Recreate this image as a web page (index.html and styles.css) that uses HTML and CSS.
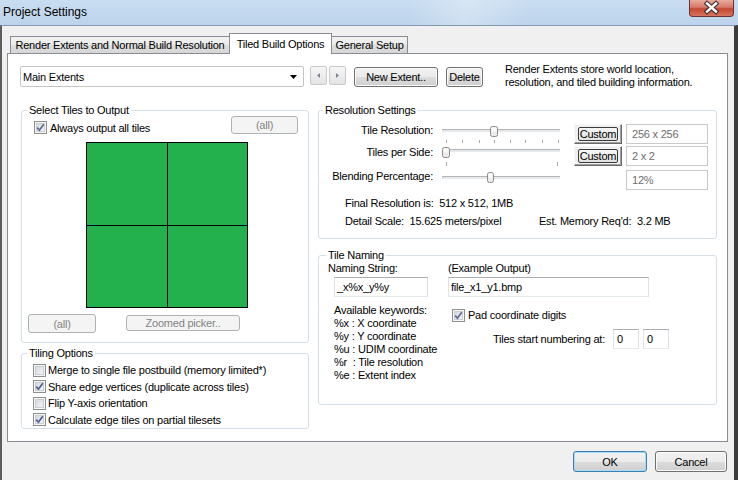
FILE: index.html
```html
<!DOCTYPE html>
<html>
<head>
<meta charset="utf-8">
<title>Project Settings</title>
<link rel="stylesheet" href="styles.css">
</head>
<body>
<div class="titlebar">
  <span class="title">Project Settings</span>
  <div class="close">
    <svg width="43" height="16" viewBox="0 0 43 16"><path d="M17 3.5 L26 11.5 M26 3.5 L17 11.5" stroke="#3a3030" stroke-width="4.6" stroke-linecap="square" fill="none"/><path d="M17 3.5 L26 11.5 M26 3.5 L17 11.5" stroke="#ffffff" stroke-width="2.4" stroke-linecap="square" fill="none"/></svg>
  </div>
</div>
<div class="client">
  <div class="tabs">
    <div class="tab t1">Render Extents and Normal Build Resolution</div>
    <div class="tab t2">Tiled Build Options</div>
    <div class="tab t3">General Setup</div>
  </div>
  <div class="panel">
    <div class="toprow">
      <div class="combo"><span>Main Extents</span><svg width="7" height="4" viewBox="0 0 7 4"><path d="M0 0H7L3.5 4Z" fill="#000"/></svg></div>
      <div class="spin">
        <div class="sb"><svg width="3" height="5" viewBox="0 0 3 5"><path d="M3 0V5L0 2.5Z" fill="#7d8796"/></svg></div>
        <div class="sb"><svg width="3" height="5" viewBox="0 0 3 5"><path d="M0 0V5L3 2.5Z" fill="#7d8796"/></svg></div>
      </div>
      <button class="btn newext">New Extent..</button>
      <button class="btn del">Delete</button>
      <div class="desc">Render Extents store world location,<br>resolution, and tiled building information.</div>
    </div>
    <div class="cols">
      <div class="col leftcol">
        <fieldset class="grp g1">
          <legend>Select Tiles to Output</legend>
          <div class="g1in">
            <div class="r1">
              <div class="chk"><span class="cb on"><svg width="11" height="11" viewBox="0 0 11 11"><path d="M2.2 5.6 L4.4 8.2 L8.8 2.3" stroke="#5a6a8e" stroke-width="1.7" fill="none"/></svg></span><span>Always output all tiles</span></div>
              <button class="btn dis allbtn">(all)</button>
            </div>
            <div class="tiles"><div class="tc"></div><div class="tc"></div><div class="tc"></div><div class="tc"></div></div>
            <div class="pick">
              <button class="btn dis all2">(all)</button>
              <button class="btn dis zoom">Zoomed picker..</button>
            </div>
          </div>
        </fieldset>
        <fieldset class="grp g2">
          <legend>Tiling Options</legend>
          <div class="opts">
            <div class="opt"><span class="cb"></span><span>Merge to single file postbuild (memory limited*)</span></div>
            <div class="opt"><span class="cb on"><svg width="11" height="11" viewBox="0 0 11 11"><path d="M2.2 5.6 L4.4 8.2 L8.8 2.3" stroke="#4a5e92" stroke-width="1.7" fill="none"/></svg></span><span>Share edge vertices (duplicate across tiles)</span></div>
            <div class="opt"><span class="cb"></span><span>Flip Y-axis orientation</span></div>
            <div class="opt"><span class="cb on"><svg width="11" height="11" viewBox="0 0 11 11"><path d="M2.2 5.6 L4.4 8.2 L8.8 2.3" stroke="#4a5e92" stroke-width="1.7" fill="none"/></svg></span><span>Calculate edge tiles on partial tilesets</span></div>
          </div>
        </fieldset>
      </div>
      <div class="col rightcol">
        <fieldset class="grp g3">
          <legend class="lg3">Resolution Settings</legend>
          <div class="res">
            <div class="rgrid">
              <div class="lbl">Tile Resolution:</div>
              <svg class="slider" width="120" height="22" viewBox="0 0 120 22">
                <rect x="1" y="5" width="118" height="1" fill="#b4b4b4"/><rect x="1" y="6" width="118" height="2" fill="#e6e9eb"/>
                <g fill="#a8a8a8"><rect x="5" y="16" width="1" height="3"/><rect x="21" y="16" width="1" height="3"/><rect x="38" y="16" width="1" height="3"/><rect x="53" y="16" width="1" height="3"/><rect x="69" y="16" width="1" height="3"/><rect x="84" y="16" width="1" height="3"/><rect x="101" y="16" width="1" height="3"/><rect x="117" y="16" width="1" height="3"/></g>
                <rect x="49.5" y="2.5" width="7" height="10" rx="2" fill="#ececec" stroke="#8a8a8a"/><rect x="50.5" y="3.5" width="5" height="4" fill="#fafafa"/>
              </svg>
              <div class="cellb"><button class="custom"><span class="ci">Custom</span></button></div>
              <div class="tb dis">256 x 256</div>

              <div class="lbl">Tiles per Side:</div>
              <svg class="slider" width="120" height="22" viewBox="0 0 120 22">
                <rect x="1" y="3" width="118" height="1" fill="#b4b4b4"/><rect x="1" y="4" width="118" height="2" fill="#e6e9eb"/>
                <g fill="#a8a8a8"><rect x="5" y="16" width="1" height="4"/><rect x="116" y="16" width="1" height="4"/></g>
                <rect x="1.5" y="1.5" width="7" height="10" rx="2" fill="#ececec" stroke="#8a8a8a"/><rect x="2.5" y="2.5" width="5" height="4" fill="#fafafa"/>
              </svg>
              <div class="cellb"><button class="custom"><span class="ci">Custom</span></button></div>
              <div class="tb dis">2 x 2</div>

              <div class="lbl">Blending Percentage:</div>
              <svg class="slider" width="120" height="20" viewBox="0 0 120 20">
                <rect x="1" y="6" width="118" height="1" fill="#b4b4b4"/><rect x="1" y="7" width="118" height="2" fill="#e6e9eb"/>
                <rect x="46.5" y="2.5" width="6" height="10" rx="2" fill="#ececec" stroke="#8a8a8a"/><rect x="47.5" y="3.5" width="4" height="4" fill="#fafafa"/>
              </svg>
              <div class="cellb"></div>
              <div class="tb dis">12%</div>
            </div>
            <div class="info">
              <div class="iline">Final Resolution is:  512 x 512, 1MB</div>
              <div class="iline two"><span class="dl">Detail Scale:  15.625 meters/pixel</span><span>Est. Memory Req'd:  3.2 MB</span></div>
            </div>
          </div>
        </fieldset>
        <fieldset class="grp g4">
          <legend class="lg4">Tile Naming</legend>
          <div class="nm">
            <div>Naming String:</div>
            <div>(Example Output)</div>
            <div class="tb nin">_x%x_y%y</div>
            <div class="tb exin">file_x1_y1.bmp</div>
            <div class="kw">Available keywords:<br>%x : X coordinate<br>%y : Y coordinate<br>%u : UDIM coordinate<br>%r  : Tile resolution<br>%e : Extent index</div>
            <div class="rightnm">
              <div class="pad"><span class="cb on"><svg width="11" height="11" viewBox="0 0 11 11"><path d="M2.2 5.6 L4.4 8.2 L8.8 2.3" stroke="#5a6a8e" stroke-width="1.7" fill="none"/></svg></span><span>Pad coordinate digits</span></div>
              <div class="num"><span class="numl">Tiles start numbering at:</span><div class="tb small">0</div><div class="tb small s2">0</div></div>
            </div>
          </div>
        </fieldset>
      </div>
    </div>
  </div>
  <div class="footer">
    <button class="btn ok">OK</button>
    <button class="btn cancel">Cancel</button>
  </div>
</div>
</body>
</html>
```
FILE: styles.css
```css
body {
  margin: 0;
  width: 738px;
  height: 480px;
  overflow: hidden;
  font-family: "Liberation Sans", Arial, sans-serif;
  font-size: 11px;
  letter-spacing: -0.22px;
  color: #000;
  background: #f0f0f0;
}

.titlebar {
  height: 25px;
  display: flex;
  justify-content: space-between;
  align-items: flex-start;
  background:
    linear-gradient(100deg, rgba(255,255,255,0) 55%, rgba(255,255,255,0.28) 63%, rgba(255,255,255,0) 72%),
    linear-gradient(180deg, #c9ddf1 0%, #bcd3eb 100%);
}
.title {
  font-size: 12px;
  letter-spacing: 0;
  line-height: 16px;
  padding: 4px 0 0 3px;
}
.close {
  box-sizing: border-box;
  width: 45px;
  height: 17px;
  margin-right: 4px;
  border: 1px solid #6b3232;
  border-top: none;
  border-radius: 0 0 4px 4px;
  background: linear-gradient(180deg, #e9aa9e 0%, #d67a69 45%, #c5472f 55%, #d77460 100%);
}
.close svg { display: block; }

.client {
  box-sizing: border-box;
  height: 455px;
  border-top: 1px solid #8799ae;
  border-left: 2px solid #5e5e5e;
  border-right: 4px solid #3c3c3c;
  background: #f0f0f0;
  display: flex;
  flex-direction: column;
}

.tabs {
  display: flex;
  align-items: flex-end;
  height: 21px;
  margin: 7px 0 -1px 8px;
  position: relative;
  z-index: 1;
}
.tab {
  box-sizing: border-box;
  border: 1px solid #898c95;
  border-bottom: none;
  text-align: center;
  background: linear-gradient(180deg, #f3f3f3 0%, #ebebeb 50%, #dedede 51%, #d6d6d6 100%);
  line-height: 16px;
  height: 17px;
  margin-bottom: 1px;
}
.t1 { width: 220px; }
.t2 {
  width: 103px;
  margin-left: -1px;
  height: 21px;
  margin-bottom: 0;
  background: #fff;
  line-height: 20px;
}
.t3 { width: 77px; margin-left: -1px; }

.panel {
  box-sizing: border-box;
  margin-left: 5px;
  width: 721px;
  height: 389px;
  border: 1px solid #898c95;
  background: #fff;
  padding: 12px 0 0 12px;
}

.toprow {
  display: flex;
  align-items: flex-start;
  height: 21px;
}
.combo {
  box-sizing: border-box;
  width: 284px;
  height: 21px;
  border: 1px solid #c4c4c4;
  border-radius: 2px;
  background: #fff;
  display: flex;
  align-items: center;
  justify-content: space-between;
  padding: 0 6px 0 2px;
}
.spin {
  display: flex;
  gap: 2px;
  margin-left: 6px;
}
.sb {
  box-sizing: border-box;
  width: 17px;
  height: 19px;
  border: 1px solid #cacaca;
  border-radius: 2px;
  background: linear-gradient(180deg, #f6f6f6, #e4e4e4);
  display: flex;
  align-items: center;
  justify-content: center;
}

.btn {
  box-sizing: border-box;
  border: 1px solid #707070;
  border-radius: 3px;
  background: linear-gradient(180deg, #f2f2f2 0%, #ebebeb 50%, #dddddd 51%, #cfcfcf 100%);
  box-shadow: inset 0 0 0 1px #fbfbfb;
  font: inherit;
  letter-spacing: inherit;
  color: #000;
  padding: 0;
  display: flex;
  align-items: center;
  justify-content: center;
}
.btn.dis {
  border-color: #adb2b5;
  background: #f4f4f4;
  box-shadow: none;
  color: #838383;
}
.newext { width: 84px; height: 20px; margin: 1px 0 0 8px; }
.del { width: 37px; height: 20px; margin: 1px 0 0 8px; }
.desc {
  margin: -3px 0 0 22px;
  line-height: 13px;
}

.cols {
  display: flex;
  gap: 9px;
  margin: 17px 0 0 1px;
}
.leftcol { width: 288px; }
.rightcol { width: 399px; }

.grp {
  margin: 0;
  padding: 0;
  min-width: 0;
  border: 1px solid #d5dfe5;
  border-radius: 3px;
}
.grp legend {
  padding: 0 2px;
  margin-left: 5px;
  line-height: 13px;
}
.grp .lg3 { margin-left: 4px; }
.grp .lg4 { margin-left: 7px; }

.g1in { padding: 0 10px 9px 12px; }
.r1 {
  display: flex;
  margin-top: -1px;
  height: 18px;
}
.chk {
  display: flex;
  align-items: center;
  gap: 3px;
  height: 13px;
  margin-top: 5px;
}
.allbtn { width: 67px; height: 18px; margin-left: auto; }

.cb {
  box-sizing: border-box;
  display: block;
  flex: none;
  width: 13px;
  height: 13px;
  border: 1px solid #8e8f8f;
  background: linear-gradient(135deg, #cdd1d6 0%, #e9ebee 60%, #f8f8f8 100%);
  box-shadow: inset 0 0 0 1px #f6f6f6, inset 0 0 0 2px #c9ced4;
}
.cb svg { display: block; }

.tiles {
  margin: 8px 0 0 52px;
  width: 162px;
  height: 166px;
  box-sizing: border-box;
  padding: 1px;
  background: #000;
  display: grid;
  grid-template-columns: 80px 79px;
  grid-template-rows: 82px 81px;
  gap: 1px;
}
.tc { background: #22b14c; }

.pick {
  display: flex;
  align-items: flex-start;
  margin: 6px 0 0 -6px;
}
.all2 { width: 68px; height: 19px; }
.zoom { width: 114px; height: 16px; margin: 1px 0 0 30px; }

.g2 { margin-top: 4px; }
.opts { padding: 2px 0 0 11px; }
.opt {
  display: flex;
  align-items: center;
  gap: 2px;
  height: 16.5px;
}

.res { padding: 7px 0 10px 0; }
.rgrid {
  display: grid;
  grid-template-columns: 122px 133px 52px 82px;
  grid-template-rows: 22px 24px 20px;
  align-items: start;
}
.lbl {
  text-align: right;
  padding-right: 8px;
  line-height: 13px;
}
.slider { display: block; }
.custom {
  box-sizing: border-box;
  width: 48px;
  height: 20px;
  padding: 2px 3px;
  border: 1px solid;
  border-color: #f8f8f8 #696969 #696969 #f8f8f8;
  box-shadow: inset -1px -1px 0 #a0a0a0;
  background: #f0f0f0;
  font: inherit;
  letter-spacing: inherit;
  display: flex;
}
.ci {
  flex: 1;
  border: 1px solid #3a3a3a;
  border-radius: 2px;
  background: linear-gradient(180deg, #f6f6f6, #e2e2e2);
  line-height: 12px;
  text-align: center;
  color: #000;
}

.tb {
  box-sizing: border-box;
  height: 20px;
  border: 1px solid;
  border-color: #abadb3 #dbdfe6 #e3e9ef #e2e3ea;
  background: #fff;
  padding: 0 2px;
  line-height: 18px;
  white-space: pre;
}
.tb.dis {
  border-color: #c9c9c9;
  color: #6d6d6d;
  padding-left: 5px;
}

.info { padding-left: 26px; margin-top: 7px; }
.iline { line-height: 13px; white-space: pre; }
.iline.two { display: flex; margin-top: 5px; }
.dl { width: 194px; }

.g4 { margin-top: 10px; }
.nm {
  display: grid;
  grid-template-columns: 120px 1fr;
  padding: 0 0 22px 9px;
  line-height: 13px;
}
.nin { width: 94px; margin: 2px 0 0 6px; }
.exin { width: 201px; margin-top: 2px; }
.kw {
  margin: 6.5px 0 0 6px;
  line-height: 13px;
  white-space: pre;
}
.pad {
  display: flex;
  align-items: center;
  gap: 3px;
  margin: 12px 0 0 4px;
  height: 13px;
}
.num {
  display: flex;
  align-items: center;
  margin-top: 7px;
}
.numl { width: 157px; text-align: right; }
.tb.small { width: 26px; margin-left: 8px; padding-left: 3px; }
.tb.small.s2 { margin-left: 4px; }

.footer {
  display: flex;
  justify-content: flex-end;
  gap: 8px;
  margin: 9px 7px 0 0;
}
.ok, .cancel { height: 21px; }
.ok {
  width: 74px;
  border-color: #3c7fb1;
  box-shadow: inset 0 0 0 1px #a6dcf6;
}
.cancel { width: 72px; }
```
